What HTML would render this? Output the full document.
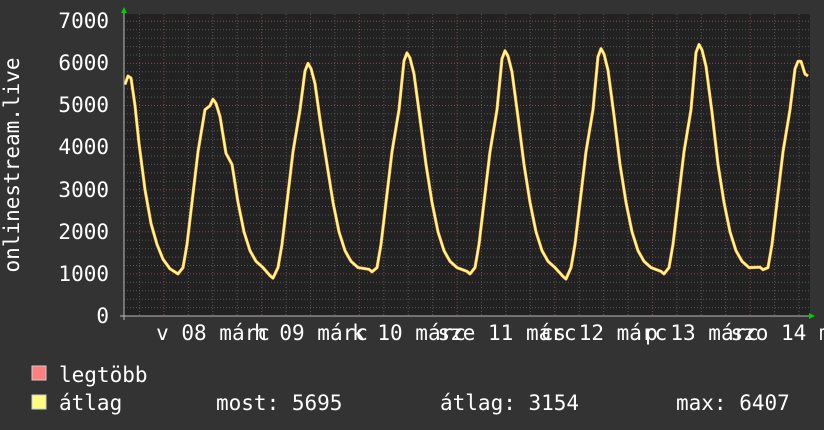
<!DOCTYPE html>
<html><head><meta charset="utf-8"><style>
html,body{margin:0;padding:0;background:#333;}
svg{display:block}
text{font-family:"DejaVu Sans Mono","Liberation Mono",monospace;fill:#fff;}
</style></head><body>
<svg id="s" width="824" height="430" viewBox="0 0 824 430" xmlns="http://www.w3.org/2000/svg">
<rect width="824" height="430" fill="#333"/>
<rect x="124" y="14" width="686" height="302" fill="#222"/>
<g id="grid"></g>
<polyline id="mx" fill="none" stroke="#ff7f7f" stroke-width="3.2" stroke-linejoin="round"/>
<polyline id="av" fill="none" stroke="#ffff70" stroke-width="2.2" stroke-linejoin="round"/>
<line x1="120" y1="316" x2="812" y2="316" stroke="#bbb" stroke-width="1"/>
<line x1="124" y1="12" x2="124" y2="320" stroke="#bbb" stroke-width="1"/>
<polygon points="121,13 127,13 124,7" fill="#0c0"/>
<polygon points="809,313 809,319 815,316" fill="#0c0"/>
<g font-size="21" text-anchor="end">
<text x="109" y="28">7000</text>
<text x="109" y="70">6000</text>
<text x="109" y="112">5000</text>
<text x="109" y="154">4000</text>
<text x="109" y="197">3000</text>
<text x="109" y="239">2000</text>
<text x="109" y="281">1000</text>
<text x="109" y="323">0</text>
</g>
<text font-size="21" transform="translate(19,165) rotate(-90)" text-anchor="middle">onlinestream.live</text>
<g font-size="21" text-anchor="middle">
<text x="213" y="340">v 08 márc</text>
<text x="311" y="340">h 09 márc</text>
<text x="409" y="340">k 10 márc</text>
<text x="507" y="340">sze 11 márc</text>
<text x="604" y="340">cs 12 márc</text>
<text x="702" y="340">p 13 márc</text>
<text x="800" y="340">szo 14 márc</text>
</g>
<rect x="32" y="366" width="14" height="14" fill="#ff7f7f" stroke="#ccc" stroke-width="1"/>
<rect x="32" y="395" width="14" height="14" fill="#ffff7f" stroke="#ccc" stroke-width="1"/>
<g font-size="21">
<text x="59" y="382">legtöbb</text>
<text x="59" y="410">átlag</text>
<text x="216" y="410">most: 5695</text>
<text x="440" y="410">átlag: 3154</text>
<text x="676" y="410">max: 6407</text>
</g>
</svg>
<script>
var g=document.getElementById('grid'),h='';
function Y(v){return 316-v*0.0421;}
for(var v=200;v<=7000;v+=200){var y=Y(v).toFixed(1);var maj=v%1000==0;
h+='<line x1="124" x2="810" y1="'+y+'" y2="'+y+'" stroke="'+(maj?'#7a4a4a':'#555')+'" stroke-dasharray="1,2"/>';}
for(var d=0;d<8;d++){for(var k=0;k<4;k++){var x=164+d*97.7+k*24.4-97.7;if(x<126||x>808)continue;
h+='<line y1="14" y2="316" x1="'+x.toFixed(1)+'" x2="'+x.toFixed(1)+'" stroke="'+(k==0?'#7a4a4a':'#555')+'" stroke-dasharray="1,2"/>';}}
g.innerHTML=h;
var tr=[178,273,372,470,566,664,763],tv=[1000,900,1050,1000,880,1000,1100],pk=[5150,6000,6250,6300,6350,6450,6050];
var pts=[[125,5500],[128,5700],[131,5650],[135,5000],[139,4100],[145,3000],[151,2200],[157,1700],[163,1350],[170,1120]];
for(var i=0;i<7;i++){var T=tr[i],P=pk[i];
pts.push([T,tv[i]],[T+5,1150],[T+9,1700],[T+14,2700],[T+20,3900],[T+27,4900],[T+32,P*0.97],[T+35,P]);
if(i==6){pts.push([T+38,P],[T+42,P*0.95],[T+45,5700]);break;}
var N=tr[i+1];
pts.push([T+38,P*0.98],[T+42,P*0.92],[T+48,P*0.75],[T+54,3600],[T+60,2700],[T+66,2000],[T+72,1550],[T+78,1300],[T+85,1150],[N-3,tv[i+1]+60]);}
var s=pts.map(function(p){return p[0]+','+Y(p[1]).toFixed(1)}).join(' ');
document.getElementById('mx').setAttribute('points',s);
document.getElementById('av').setAttribute('points',s);
</script>
</body></html>
